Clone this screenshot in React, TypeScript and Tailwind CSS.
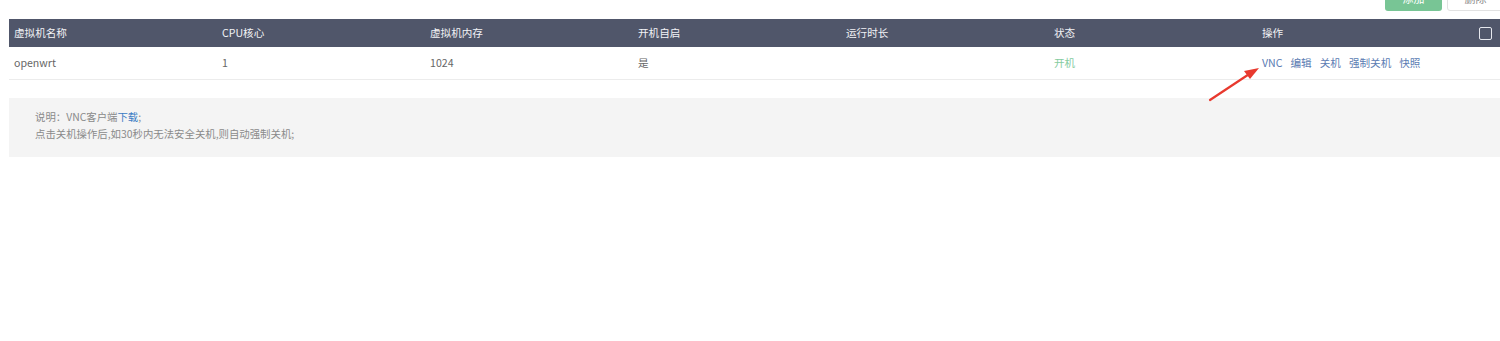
import React from "react";

const cols = ["虚拟机名称", "CPU核心", "虚拟机内存", "开机自启", "运行时长", "状态", "操作"];

export default function App() {
  return (
    <div
      className="relative w-[1500px] h-[341px] overflow-hidden bg-white text-[10.6px]"
      style={{ fontFamily: '"Noto Sans CJK SC", "Liberation Sans", sans-serif' }}
    >
      {/* top buttons */}
      <div className="flex justify-end h-[19px] mr-[-4px]">
        <div className="flex items-start gap-[5px] mt-[-14px]">
          <button className="w-[57px] h-[25px] rounded-[3px] bg-[#78c595] text-white text-[11px] leading-[25px]">添加</button>
          <button className="w-[57px] h-[25px] rounded-[3px] bg-white border border-[#e2e2e2] text-[#888] text-[11px] leading-[23px]">删除</button>
        </div>
      </div>

      {/* table */}
      <div className="ml-[9px]">
        <div className="flex h-[28px] items-center bg-[#50566a] text-[#f2f3f6]">
          {cols.map((c) => (
            <div key={c} className="w-[208px] shrink-0 pl-[5px] leading-[28px]">{c}</div>
          ))}
          <div className="flex-1 flex justify-end pr-[8px]">
            <div className="w-[13px] h-[13px] border border-[#e6e8ee] rounded-[2px]" />
          </div>
        </div>
        <div className="flex h-[33px] items-center border-b border-[#ececec] text-[#666]">
          <div className="w-[208px] shrink-0 pl-[5px]">openwrt</div>
          <div className="w-[208px] shrink-0 pl-[5px]">1</div>
          <div className="w-[208px] shrink-0 pl-[5px]">1024</div>
          <div className="w-[208px] shrink-0 pl-[5px]">是</div>
          <div className="w-[208px] shrink-0 pl-[5px]"></div>
          <div className="w-[208px] shrink-0 pl-[5px] text-[#86cc9f]">开机</div>
          <div className="w-[208px] shrink-0 pl-[5px] flex gap-[8px] text-[#5b7cb3]">
            <span>VNC</span>
            <span>编辑</span>
            <span>关机</span>
            <span>强制关机</span>
            <span>快照</span>
          </div>
        </div>
      </div>

      {/* note */}
      <div className="ml-[9px] mt-[18px] h-[59px] bg-[#f4f4f4] pl-[26px] pt-[10px] text-[#8a8a8a] text-[10.4px] leading-[17px]">
        <div>
          说明：VNC客户端<span className="text-[#3b7cc4]">下载</span>;
        </div>
        <div>点击关机操作后,如30秒内无法安全关机,则自动强制关机;</div>
      </div>

      {/* red arrow annotation */}
      <svg className="absolute left-0 top-0" width="1500" height="341" viewBox="0 0 1500 341">
        <line x1="1210" y1="100" x2="1250" y2="73.5" stroke="#e8392e" strokeWidth="2.2" strokeLinecap="round" />
        <polygon points="1259,68 1244,71 1250,79" fill="#e8392e" />
      </svg>
    </div>
  );
}
